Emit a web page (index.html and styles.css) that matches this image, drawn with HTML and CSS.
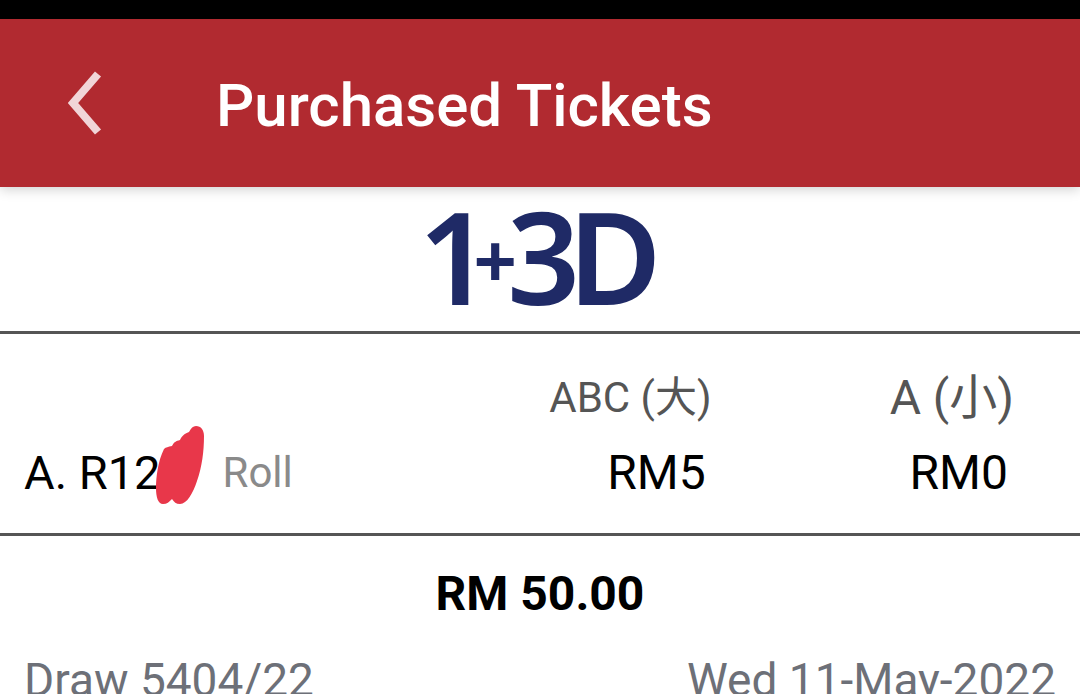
FILE: index.html
```html
<!doctype html>
<html lang="en">
    <head>
        <meta charset="UTF-8" />
        <meta name="viewport" content="width=device-width, initial-scale=1.0" />
        <title>Purchased Tickets</title>
        <link rel="stylesheet" href="styles.css">
    </head>
    <body>
        <div class="status-bar"></div>
        <header class="app-bar">
            <button class="back" type="button" aria-label="Back">
                <svg width="34" height="64" viewBox="0 0 34 64" aria-hidden="true">
                    <path d="M30 3 L5 32 L30 61" />
                </svg>
            </button>
            <h1>Purchased Tickets</h1>
        </header>
        <main>
            <h2 class="logo"><span>1</span><span class="plus">+</span><span>3</span><span>D</span></h2>
            <table class="bets">
                <thead>
                    <tr>
                        <td></td>
                        <th class="big" scope="col">ABC (大)</th>
                        <th class="small" scope="col">A (小)</th>
                    </tr>
                </thead>
                <tbody>
                    <tr>
                        <th scope="row">
                            <div class="entry">
                                <span>A. R12</span>
                                <svg class="scribble" width="50" height="80" viewBox="0 0 50 80" aria-hidden="true">
                                    <path d="M41 1 C46 1 49 5 49 11 C49 26 47 42 42 56 C38 68 32 79 25 79 C21 79 19 77 17 74 C14 77 12 79 8 79 C3 79 1 72 1 63 C1 52 3 36 9 24 C11 22 13 22 17 21 C19 17 21 16 25 15 C27 11 29 9 34 7 C36 3 38 1 41 1 Z" />
                                </svg>
                                <span class="type">Roll</span>
                            </div>
                        </th>
                        <td>RM5</td>
                        <td>RM0</td>
                    </tr>
                </tbody>
            </table>
            <p class="total">RM 50.00</p>
            <div class="draw">
                <span>Draw 5404/22</span>
                <span>Wed 11-May-2022</span>
            </div>
        </main>
    </body>
</html>
```
FILE: styles.css
```css
body {
    font-family: Roboto, "Noto Sans CJK SC", sans-serif;
    font-size: 48px;
    line-height: 56px;
    background-color: #fff;
    color: #000;
    margin: 0;
    overflow: hidden;
}

.status-bar {
    height: 19px;
    background-color: #000;
}

.app-bar {
    display: flex;
    align-items: center;
    gap: 62px;
    height: 168px;
    padding: 0 16px;
    background-color: #b12a30;
    box-shadow: 0 2px 12px rgba(0, 0, 0, 0.2);
}

.back {
    display: flex;
    padding: 16px 52px;
    border: none;
    background: none;
    cursor: pointer;
}

.back path {
    fill: none;
    stroke: #f1d5d8;
    stroke-width: 8px;
}

h1 {
    margin: 0;
    padding-top: 6px;
    color: #fff;
    font-size: 60px;
    font-weight: 500;
    line-height: 72px;
}

.logo {
    display: flex;
    justify-content: center;
    align-items: center;
    height: 138px;
    margin: 0;
    padding-bottom: 6px;
    color: #1f2a66;
    font-family: "Noto Sans", sans-serif;
    font-size: 128px;
    font-weight: 600;
    line-height: 138px;
}

.logo span {
    margin: 0 -6px;
}

.logo .plus {
    margin: 0 -4px 0 -12px;
    padding-top: 6px;
    font-size: 76px;
    font-weight: 700;
}

.bets {
    width: 100%;
    table-layout: fixed;
    border-collapse: collapse;
    border-top: 3px solid #555;
    border-bottom: 3px solid #555;
}

.bets th,
.bets td {
    padding: 19px 72px 32px 0;
    font-weight: 400;
    text-align: right;
    white-space: nowrap;
}

.bets thead th {
    padding: 36px 66px 0 0;
    color: #555;
}

.bets thead td {
    padding: 0;
}

.bets .big {
    width: 33%;
    box-sizing: border-box;
    font-size: 42px;
}

.bets .small {
    width: 28%;
    box-sizing: border-box;
}

.bets tbody th {
    padding-left: 24px;
    padding-right: 0;
}

.entry {
    display: flex;
    align-items: center;
    font-size: 47px;
}

.scribble {
    margin: -20px 18px -4px -6px;
    fill: #e8374a;
}

.type {
    color: #8a8a8a;
    font-size: 42px;
}

.total {
    margin: 30px 0;
    font-weight: 700;
    text-align: center;
}

.draw {
    display: flex;
    justify-content: space-between;
    padding: 0 24px;
    color: #6d7078;
    font-size: 46px;
}
```
